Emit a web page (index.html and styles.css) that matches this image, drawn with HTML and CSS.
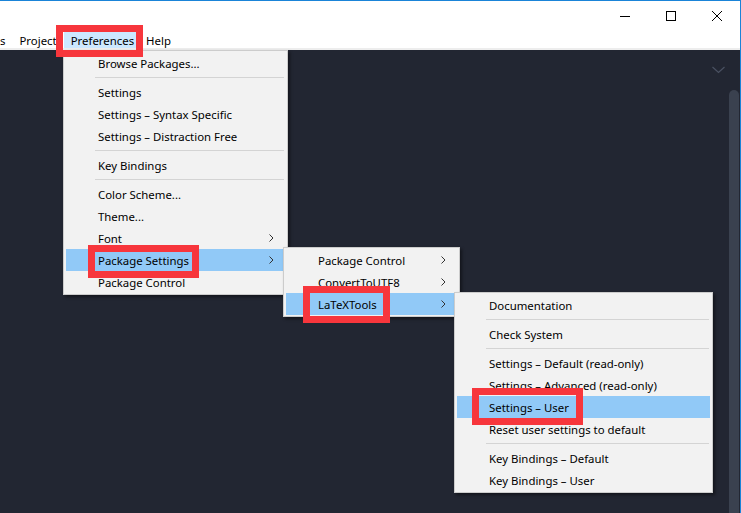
FILE: index.html
```html
<!DOCTYPE html>
<html>
<head>
<meta charset="utf-8">
<link rel="stylesheet" href="styles.css">
</head>
<body>
<div class="window">
  <div class="titlebar">
    <div class="ctrl"><svg width="12" height="12" viewBox="0 0 12 12"><path d="M1 6.5 H11" stroke="#000" stroke-width="1"/></svg></div>
    <div class="ctrl"><svg width="12" height="12" viewBox="0 0 12 12"><rect x="1.5" y="1.5" width="9" height="9" fill="none" stroke="#000" stroke-width="1"/></svg></div>
    <div class="ctrl"><svg width="12" height="12" viewBox="0 0 12 12"><path d="M1 1 L11 11 M11 1 L1 11" stroke="#000" stroke-width="1"/></svg></div>
  </div>
  <div class="menubar">
    <span class="mi first">s</span>
    <span class="mi">Project</span>
    <span class="mi active">Preferences</span>
    <span class="mi">Help</span>
  </div>
  <div class="editor">
    <div class="code">
      <div class="tabrow">
        <svg class="chev" width="13" height="8" viewBox="0 0 13 8"><path d="M0.5 1 L6.5 6.5 L12.5 1" fill="none" stroke="#4a5162" stroke-width="1.2"/></svg>
      </div>
    </div>
    <div class="vscroll"><div class="thumb"></div></div>
  </div>
</div>

<div class="menu m1">
  <div class="item">Browse Packages...</div>
  <div class="sep"></div>
  <div class="item">Settings</div>
  <div class="item">Settings – Syntax Specific</div>
  <div class="item">Settings – Distraction Free</div>
  <div class="sep"></div>
  <div class="item">Key Bindings</div>
  <div class="sep"></div>
  <div class="item">Color Scheme...</div>
  <div class="item">Theme...</div>
  <div class="item sub">Font<svg class="arr" width="5" height="8" viewBox="0 0 5 8"><path d="M0.5 0.5 L4 4 L0.5 7.5" fill="none" stroke="#333" stroke-width="1"/></svg></div>
  <div class="item sub hl">Package Settings<svg class="arr" width="5" height="8" viewBox="0 0 5 8"><path d="M0.5 0.5 L4 4 L0.5 7.5" fill="none" stroke="#333" stroke-width="1"/></svg></div>
  <div class="item">Package Control</div>
</div>

<div class="menu m2">
  <div class="item sub">Package Control<svg class="arr" width="5" height="8" viewBox="0 0 5 8"><path d="M0.5 0.5 L4 4 L0.5 7.5" fill="none" stroke="#333" stroke-width="1"/></svg></div>
  <div class="item sub">ConvertToUTF8<svg class="arr" width="5" height="8" viewBox="0 0 5 8"><path d="M0.5 0.5 L4 4 L0.5 7.5" fill="none" stroke="#333" stroke-width="1"/></svg></div>
  <div class="item sub hl">LaTeXTools<svg class="arr" width="5" height="8" viewBox="0 0 5 8"><path d="M0.5 0.5 L4 4 L0.5 7.5" fill="none" stroke="#333" stroke-width="1"/></svg></div>
</div>

<div class="menu m3">
  <div class="item">Documentation</div>
  <div class="sep"></div>
  <div class="item">Check System</div>
  <div class="sep"></div>
  <div class="item">Settings – Default (read-only)</div>
  <div class="item">Settings – Advanced (read-only)</div>
  <div class="item hl">Settings – User</div>
  <div class="item">Reset user settings to default</div>
  <div class="sep"></div>
  <div class="item">Key Bindings – Default</div>
  <div class="item">Key Bindings – User</div>
</div>

<div class="mark b1"></div>
<div class="mark b2"></div>
<div class="mark b3"></div>
<div class="mark b4"></div>
</body>
</html>
```

FILE: styles.css
```css
* { box-sizing: border-box; }
html, body {
  margin: 0;
  padding: 0;
  width: 741px;
  height: 513px;
  overflow: hidden;
  font-family: "Noto Sans", "Open Sans", sans-serif;
  font-size: 11.4px;
  color: #000;
}
.window {
  width: 741px;
  height: 513px;
  border-top: 1px solid #1a84d8;
  border-right: 1px solid #1a84d8;
  display: flex;
  flex-direction: column;
  background: #222632;
}
.titlebar {
  height: 29px;
  background: #fff;
  display: flex;
  justify-content: flex-end;
}
.ctrl {
  width: 46px;
  height: 29px;
  display: flex;
  align-items: center;
  justify-content: center;
}
.menubar {
  height: 20px;
  background: #fff;
  border-bottom: 2px solid #ededed;
  padding-top: 2px;
  display: flex;
  white-space: nowrap;
}
.mi {
  height: 16px;
  line-height: 18px;
  padding: 0 7px;
}
.mi.first { margin-left: -7px; }
.mi.active { background: #cce8ff; padding: 0 5px 0 7px; }
.editor {
  flex: 1;
  display: flex;
}
.code { flex: 1; }
.tabrow {
  display: flex;
  justify-content: flex-end;
  padding: 16px 3px 0 0;
}
.vscroll {
  width: 12px;
  padding: 40px 1px 0 1px;
  display: flex;
}
.thumb {
  flex: 1;
  background: #3a414f;
  border-radius: 5px 5px 0 0;
}
.menu {
  position: absolute;
  background: #f2f2f2;
  border: 1px solid #cccccc;
  padding: 1px 2px;
  box-shadow: 2px 2px 3px rgba(0, 0, 0, 0.45);
  white-space: nowrap;
}
.m1 { left: 63px; top: 50px; width: 225px; }
.m2 { left: 283px; top: 247px; width: 177px; }
.m3 { left: 454px; top: 292px; width: 259px; }
.item {
  height: 22px;
  line-height: 23px;
  padding-left: 32px;
  position: relative;
}
.item.hl { background: #91c9f7; }
.arr {
  position: absolute;
  right: 11px;
  top: 7px;
}
.sep {
  height: 1px;
  margin: 3px 1px 3px 29px;
  background: #d4d4d4;
}
.mark {
  position: absolute;
  border: 7px solid #f7363c;
}
.b1 { left: 56px; top: 25px; width: 87px; height: 32px; }
.b2 { left: 88px; top: 245px; width: 111px; height: 33px; }
.b3 { left: 303px; top: 286px; width: 87px; height: 37px; }
.b4 { left: 472px; top: 388px; width: 111px; height: 37px; }
```
